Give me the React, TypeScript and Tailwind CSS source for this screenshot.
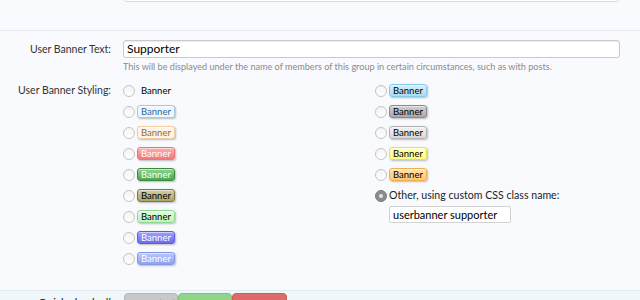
import React from "react";

const font = { fontFamily: "Lato, 'Liberation Sans', sans-serif" };

type B = { cls: string; plain?: boolean };

const left: B[] = [
  { cls: "", plain: true },
  { cls: "bg-[#eef7fd] border-[#a5cae4] text-[#2b6a96]" },
  { cls: "bg-[#fff4e5] border-[#f1cfa2] text-[#8f6c3f]" },
  { cls: "bg-gradient-to-b from-[#ffb0b0] to-[#f07878] border-[#e87777] text-white" },
  { cls: "bg-gradient-to-b from-[#8fd68f] to-[#4ea64e] border-[#3d8a3d] text-white" },
  { cls: "bg-gradient-to-b from-[#d2cfa0] to-[#aaa56c] border-[#7b7748] text-black" },
  { cls: "bg-gradient-to-b from-[#e0fce0] to-[#c0f2c0] border-[#8fd88f] text-black" },
  { cls: "bg-gradient-to-b from-[#9f9ffb] to-[#6c6cee] border-[#5a5ae6] text-white" },
  { cls: "bg-gradient-to-b from-[#b9c7f9] to-[#8fa3ee] border-[#8497e4] text-white" },
];

const right: B[] = [
  { cls: "bg-gradient-to-b from-[#d6f0fb] to-[#a9dcf3] border-[#86c9ea] text-black" },
  { cls: "bg-gradient-to-b from-[#d2d2d2] to-[#a8a8a8] border-[#8a8a8a] text-black" },
  { cls: "bg-gradient-to-b from-[#f2f2f2] to-[#d8d8d8] border-[#b3b3b3] text-black" },
  { cls: "bg-gradient-to-b from-[#ffffb8] to-[#ffff80] border-[#e0e05a] text-black" },
  { cls: "bg-gradient-to-b from-[#ffe2b0] to-[#ffc770] border-[#f0ae52] text-black" },
];

function Radio({ checked = false }: { checked?: boolean }) {
  if (checked)
    return (
      <span className="w-[12px] h-[12px] rounded-full bg-[#8c8c8c] border border-[#7a7a7a] flex items-center justify-center shrink-0">
        <span className="w-[4px] h-[4px] rounded-full bg-[#e6e6e6]" />
      </span>
    );
  return (
    <span className="w-[12px] h-[12px] rounded-full border border-[#c4c4c4] bg-gradient-to-b from-[#f4f4f4] to-white shrink-0" />
  );
}

function Badge({ b }: { b: B }) {
  if (b.plain)
    return <span className="text-[9.5px] leading-[13px] text-black ml-[6px]">Banner</span>;
  return (
    <span
      className={`ml-[2px] h-[13px] px-[3px] border rounded-[3px] text-[9.5px] leading-[11px] shadow-[1px_1px_2px_rgba(0,0,0,0.25),inset_0_1px_0_rgba(255,255,255,0.5)] ${b.cls}`}
    >
      Banner
    </span>
  );
}

function Row({ b }: { b: B }) {
  return (
    <div className="h-[21px] flex items-center">
      <Radio />
      <Badge b={b} />
    </div>
  );
}

export default function App() {
  return (
    <div className="w-[640px] h-[300px] overflow-hidden bg-[#f9fafd] text-[#222]" style={font}>
      <div className="h-[290px]">
        <div className="h-[31px] border-b border-[#e3eaf1] overflow-hidden">
          <div className="ml-[123px] w-[497px] h-[20px] -mt-[18px] border border-[#d8dde2] rounded-[4px] bg-white" />
        </div>
        <div className="grid grid-cols-[111px_1fr] gap-x-[12px] pt-[9px]">
          <div className="text-right text-[10.5px] leading-[18px] text-[#333]">User Banner Text:</div>
          <div>
            <div className="w-[497px] h-[18px] border border-[#c9c9c9] rounded-[3px] bg-white shadow-[inset_0_1px_1px_rgba(0,0,0,0.08)] px-[3px] text-[12px] leading-[16px] text-black">
              Supporter
            </div>
            <div className="mt-[3px] text-[9.1px] leading-[11px] text-[#8b8b8b]">
              This will be displayed under the name of members of this group in certain circumstances, such as with posts.
            </div>
          </div>
          <div className="mt-[8px] text-right text-[10.5px] leading-[21px] text-[#333]">User Banner Styling:</div>
          <div className="mt-[8px] grid grid-cols-[252px_1fr]">
            <div>
              {left.map((b, i) => (
                <Row key={i} b={b} />
              ))}
            </div>
            <div>
              {right.map((b, i) => (
                <Row key={i} b={b} />
              ))}
              <div className="h-[21px] flex items-center">
                <Radio checked />
                <span className="ml-[2px] text-[10.6px] text-[#222]">Other, using custom CSS class name:</span>
              </div>
              <div className="ml-[14px] w-[122px] h-[17px] border border-[#d2d2d2] rounded-[2px] bg-white px-[3px] text-[11px] leading-[15px] text-black">
                userbanner supporter
              </div>
            </div>
          </div>
        </div>
      </div>
      <div className="h-[10px] border-t border-[#e3eaf1] bg-[#f0f7fa] flex">
        <div className="w-[111px] text-right text-[11px] leading-[18px] mt-[3px] text-[#222]">Quick check all</div>
        <div className="ml-[13px] mt-[2px] flex">
          <span className="w-[54px] h-[20px] rounded-t-[4px] bg-[#c8c8c8] border border-[#b5b5b5] text-[9px] text-center text-[#444] leading-[20px]">Not Set (No)</span>
          <span className="w-[54px] h-[20px] rounded-t-[4px] bg-[#8fd68a] border border-[#7cc678] text-[9px] text-center text-[#222] leading-[20px]">Allow</span>
          <span className="w-[55px] h-[20px] rounded-t-[4px] bg-[#de6b6b] border border-[#cf5c5c] text-[9px] text-center text-[#222] leading-[20px]">Never</span>
        </div>
        <div className="ml-auto mr-[-10px] text-[10px] mt-[5px] text-[#222]">Permissions Help</div>
      </div>
    </div>
  );
}
